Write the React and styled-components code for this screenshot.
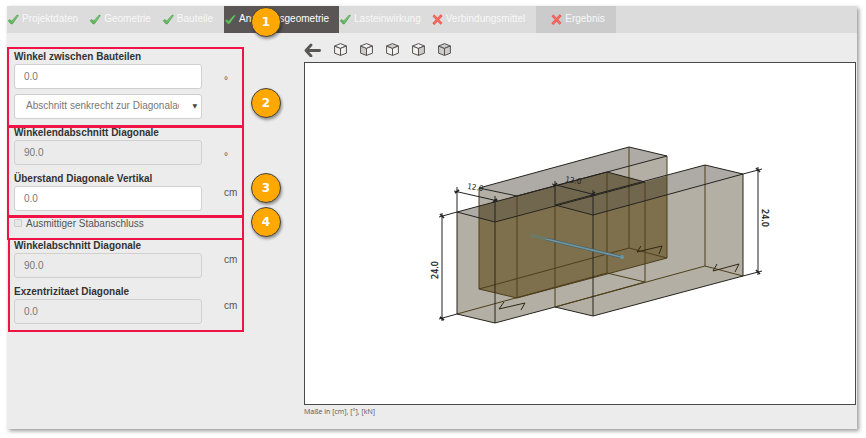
import React, { useState } from "react";
import styled, { createGlobalStyle } from "styled-components";

const colors = {
  panel: "#ececec",
  nav: "#dcdcdc",
  dark: "#5a5655",
  result: "#cbcbcb",
  mark: "#ee1446",
  badge: "#ffa800",
  text: "#555555",
  label: "#333333",
};

const GlobalStyle = createGlobalStyle`
  * {
    box-sizing: border-box;
  }
  body {
    margin: 0;
    background-color: #ffffff;
    color: ${colors.text};
    font-family: "Liberation Sans", Arial, sans-serif;
    font-size: 10px;
    line-height: 14px;
  }
`;

const Page = styled.div`
  padding: 6px 9px 9px 7px;
`;

const Panel = styled.main`
  background-color: ${colors.panel};
  box-shadow: 2px 2px 4px rgba(0, 0, 0, 0.4);
`;

const Nav = styled.nav`
  display: flex;
  height: 27px;
  background-color: ${colors.nav};
`;

const Tab = styled.a`
  position: relative;
  display: flex;
  align-items: center;
  gap: 3px;
  padding: 0 ${(p) => (p.$active ? "10px" : "11px")} 2px
    ${(p) => (p.$result ? "15px" : "0")};
  color: ${(p) => (p.$active ? "#ffffff" : "#f8f8f8")};
  background-color: ${(p) =>
    p.$active ? colors.dark : p.$result ? colors.result : "transparent"};
  text-decoration: none;
  white-space: nowrap;
`;

const Badge = styled.span`
  position: absolute;
  top: ${(p) => p.$top}px;
  left: ${(p) => p.$left}px;
  z-index: 2;
  display: flex;
  align-items: center;
  justify-content: center;
  width: 30px;
  height: 30px;
  border: 1px solid #444444;
  border-radius: 50%;
  background-color: ${colors.badge};
  box-shadow: 1px 2px 3px rgba(0, 0, 0, 0.4);
  color: #ffffff;
  font-family: "DejaVu Sans", Verdana, sans-serif;
  font-size: 12px;
  font-weight: bold;
`;

const Content = styled.div`
  display: grid;
  grid-template-columns: 297px 1fr;
`;

const Form = styled.form`
  display: flex;
  flex-direction: column;
  padding: 14px 60px 0 0;
`;

const Group = styled.section`
  position: relative;
  display: flex;
  flex-direction: column;
  gap: ${(p) => p.$gap || 7}px;
  margin-top: ${(p) => p.$overlap || 0}px;
  margin-left: ${(p) => p.$inset || 0}px;
  padding: ${(p) => p.$pad};
  box-shadow: inset 0 0 0 2px ${colors.mark};
`;

const FieldDiv = styled.div`
  display: grid;
  grid-template-columns: 188px 1fr;
  column-gap: 22px;
`;

const Label = styled.label`
  grid-column: 1 / -1;
  color: ${colors.label};
  font-weight: bold;
`;

const Input = styled.input`
  width: 100%;
  height: 25px;
  padding: 0 9px 1px;
  border: 1px solid #d0d0d0;
  border-radius: 3px;
  background-color: #ffffff;
  color: #777777;
  font: inherit;

  &:disabled {
    background-color: #ebebeb;
  }
`;

const SelectDiv = styled.div`
  position: relative;

  &::after {
    content: "▼";
    position: absolute;
    top: 6px;
    right: 5px;
    color: #444444;
    font-family: "DejaVu Sans", sans-serif;
    font-size: 6px;
    line-height: 12px;
    pointer-events: none;
  }
`;

const Select = styled.select`
  display: block;
  width: 100%;
  height: 25px;
  padding: 0 22px 1px 11px;
  border: 1px solid #d0d0d0;
  border-radius: 3px;
  appearance: none;
  background-color: #ffffff;
  color: #777777;
  font: inherit;
  text-overflow: clip;
`;

const Unit = styled.span`
  padding-top: ${(p) => (p.$low ? "10px" : "0")};
`;

const CheckLabel = styled.label`
  display: flex;
  align-items: center;
  gap: 4px;
  height: 16px;
`;

const Checkbox = styled.input`
  width: 8px;
  height: 8px;
  margin: 0 0 2px;
  border: 1px solid #cccccc;
  border-radius: 1px;
  appearance: none;
  background-color: #e6e6e6;

  &:checked {
    background-color: ${colors.dark};
  }
`;

const Viewer = styled.section`
  min-width: 0;
  padding: 0 1px 10px 0;
`;

const Toolbar = styled.div`
  display: flex;
  align-items: center;
  gap: 13px;
  height: 29px;
  padding-top: 3px;
`;

const ToolButton = styled.button`
  display: flex;
  padding: 0;
  border: none;
  background: none;
  cursor: pointer;
`;

const Drawing = styled.svg`
  display: block;
  width: 100%;
  height: auto;
  border: 1px solid #4a4a4a;
  background-color: #ffffff;
  font-family: "DejaVu Sans", Verdana, sans-serif;
`;

const Caption = styled.p`
  margin: 0;
  font-family: "Open Sans", sans-serif;
  font-size: 7px;
  line-height: 14px;
`;

const CheckIcon = () => (
  <svg width="12" height="12" viewBox="0 0 12 12" aria-hidden="true">
    <path
      d="M1.2 7.8 L2.6 6.6 L4.8 8 L10.2 2 L11.4 2.6 L5.4 10.9 L4 10.9 Z"
      fill="#62b65f"
      stroke="#4c9c4c"
      strokeWidth="0.6"
      strokeLinejoin="round"
    />
    <path d="M4.9 9.2 L10.4 2.9" stroke="#86cc82" strokeWidth="0.7" />
  </svg>
);

const CrossIcon = () => (
  <svg width="11" height="12" viewBox="0 0 11 12" aria-hidden="true">
    <path
      d="M2.4 3.4 L8.6 9.8 M8.8 3 L2.2 10.2"
      stroke="#e8524c"
      strokeWidth="2.6"
      strokeLinecap="square"
    />
    <path
      d="M2.4 3.4 L8.6 9.8 M8.8 3 L2.2 10.2"
      stroke="#f96a63"
      strokeWidth="1.6"
      strokeLinecap="square"
    />
  </svg>
);

const ArrowIcon = () => (
  <svg width="17" height="15" viewBox="0 0 17 15" aria-hidden="true">
    <path
      d="M7 3 L2 8.5 L7 14 M2.4 8.5 H15.6"
      fill="none"
      stroke={colors.dark}
      strokeWidth="2.8"
      strokeLinecap="round"
      strokeLinejoin="round"
    />
  </svg>
);

const faces = {
  left: "M0.6 3 L6.5 5.4 V12.4 L0.6 10.2 Z",
  top: "M6.5 0.6 L12.4 3 L6.5 5.4 L0.6 3 Z",
  right: "M12.4 3 L6.5 5.4 V12.4 L12.4 10.2 Z",
};

const CubeIcon = ({ shaded }) => (
  <svg width="13" height="13" viewBox="0 0 13 13" aria-hidden="true">
    {Object.keys(faces).map((face) => (
      <path
        key={face}
        d={faces[face]}
        fill={shaded.includes(face) ? "#cccccc" : "#f1f1f1"}
        stroke="#55524f"
        strokeWidth="1"
        strokeLinejoin="round"
      />
    ))}
  </svg>
);

const tabs = [
  { name: "Projektdaten", done: true },
  { name: "Geometrie", done: true },
  { name: "Bauteile", done: true },
  { name: "Anschlussgeometrie", done: true, active: true },
  { name: "Lasteinwirkung", done: true },
  { name: "Verbindungsmittel", done: false },
  { name: "Ergebnis", done: false, result: true },
];

const views = [
  { name: "Drahtmodell", shaded: [] },
  { name: "Ansicht links", shaded: ["left"] },
  { name: "Ansicht oben", shaded: ["top"] },
  { name: "Ansicht rechts", shaded: ["right"] },
  { name: "Isometrie", shaded: ["left", "top", "right"] },
];

const Field = ({ id, label, unit, initial, disabled }) => {
  const [value, setValue] = useState(initial);
  return (
    <FieldDiv>
      <Label htmlFor={id}>{label}</Label>
      <Input
        id={id}
        value={value}
        disabled={disabled}
        onChange={(e) => setValue(e.target.value)}
      />
      <Unit $low={unit === "°"}>{unit}</Unit>
    </FieldDiv>
  );
};

const Model = () => (
  <Drawing viewBox="305 63 550 341" role="img" aria-label="Anschluss">
    {/* light side faces */}
    <g fill="#b3afa5">
      <path d="M479 188 L517 196 L667 156 V258 L517 298 L479 289 Z" />
      <path d="M457 212 L607 172 L645 182 L705 165 L743 174 V276 L593 316 L555 307 L495 323 L457 314 Z" />
    </g>
    {/* light top faces */}
    <g fill="#aeaba7">
      <path d="M479 188 L629 147 L667 156 L517 196 Z" />
      <path d="M457 212 L607 172 L645 182 L495 222 Z" />
      <path d="M555 205 L705 165 L743 174 L593 215 Z" />
    </g>
    {/* overlap of the beams */}
    <path
      d="M479 206 L607 172 L645 182 L667 176 V258 L517 298 L479 289 Z"
      fill="#7f704d"
    />
    <path
      d="M479 206 L607 172 L645 182 L667 176 V195 L593 215 L555 205 L495 222 L479 218 Z"
      fill="#71674f"
    />
    {/* hidden edges */}
    <g fill="none" stroke="#4c3f1a" strokeWidth="1">
      <path d="M479 188 V289 L517 298 V196" />
      <path d="M479 289 L629 248 L667 258 L517 298" />
      <path d="M629 147 V248 M667 156 V258" />
      <path d="M457 314 L607 273 L645 282 L555 307" />
      <path d="M607 172 V273 M645 182 V282" />
      <path d="M555 307 L705 266 L743 276" />
      <path d="M555 205 V307 M705 165 V266" />
    </g>
    {/* visible edges */}
    <g fill="none" stroke="#26241f" strokeWidth="1">
      <path d="M479 188 L629 147 L667 156 L517 196 Z" />
      <path d="M457 212 L607 172 L645 182 L495 222 Z" />
      <path d="M555 205 L705 165 L743 174 L593 215 Z" />
      <path d="M457 212 V314 L495 323 V222" />
      <path d="M495 323 L555 307 L593 316 V215" />
      <path d="M593 316 L743 276 V174" />
    </g>
    {/* grain direction marks */}
    <g fill="none" stroke="#2f2810" strokeWidth="1">
      <path d="M504 302 L499 309 L525 303 L521 310" />
      <path d="M641 246 L637 252 L662 246 L659 254" />
      <path d="M717 264 L713 271 L739 264 L735 272" />
    </g>
    {/* screw */}
    <path d="M530 235 L546 239" stroke="#6b7a66" strokeWidth="3" />
    <path d="M546 239 L621 257" stroke="#49666d" strokeWidth="3" />
    <path d="M546 239 L621 257" stroke="#7395a0" strokeWidth="1.6" />
    <circle cx="622" cy="257" r="2" fill="#6296a8" />
    {/* dimension lines */}
    <g fill="none" stroke="#222222" strokeWidth="1">
      <path d="M457 187 V212 M495 196 V222 M454 191 L498 201" />
      <path d="M555 181 V205 M593 190 V215 M552 184 L596 195" />
      <path d="M442 213 V321 M439 217 L457 212 M439 319 L457 314" />
      <path d="M758 167 V275 M743 174 L762 169 M743 276 L762 271" />
    </g>
    <g fill="none" stroke="#222222" strokeWidth="1.6">
      <path d="M455 193 L459 190 M493 202 L497 199" />
      <path d="M553 187 L557 183 M591 196 L595 192" />
      <path d="M440 214 L444 218 M440 317 L444 320" />
      <path d="M756 168 L760 172 M756 270 L760 274" />
    </g>
    <g fill="#222222" fontSize="8" textAnchor="middle">
      <g fontFamily="DejaVu Sans Condensed, sans-serif">
        <text x="475" y="190" transform="rotate(8 475 190)">
          12.0
        </text>
        <text x="573" y="183" transform="rotate(8 573 183)">
          12.0
        </text>
      </g>
      <text
        x="438"
        y="270"
        stroke="#222222"
        strokeWidth="0.3"
        transform="rotate(-90 438 270)"
      >
        24.0
      </text>
      <text
        x="762"
        y="218"
        stroke="#222222"
        strokeWidth="0.3"
        transform="rotate(90 762 218)"
      >
        24.0
      </text>
    </g>
  </Drawing>
);

export default function App() {
  const [eccentric, setEccentric] = useState(false);

  return (
    <Page>
      <GlobalStyle />
      <Panel>
        <Nav>
          {tabs.map((tab) => (
            <Tab
              key={tab.name}
              href={`#${tab.name}`}
              $active={tab.active}
              $result={tab.result}
            >
              {tab.done ? <CheckIcon /> : <CrossIcon />}
              {tab.name}
              {tab.active && (
                <Badge $top={1} $left={27}>
                  1
                </Badge>
              )}
            </Tab>
          ))}
        </Nav>
        <Content>
          <Form>
            <Group $gap={5} $pad="3px 5px 8px 7px">
              <Field
                id="angle"
                label="Winkel zwischen Bauteilen"
                unit="°"
                initial="0.0"
              />
              <FieldDiv>
                <SelectDiv>
                  <Select aria-label="Abschnitt" defaultValue="diagonal">
                    <option value="diagonal">
                      Abschnitt senkrecht zur Diagonalachse
                    </option>
                    <option value="vertical">Abschnitt vertikal</option>
                  </Select>
                </SelectDiv>
              </FieldDiv>
              <Badge $top={41} $left={244}>
                2
              </Badge>
            </Group>
            <Group $overlap={-1} $pad="0 5px 6px 7px">
              <Field
                id="end-angle"
                label="Winkelendabschnitt Diagonale"
                unit="°"
                initial="90.0"
                disabled
              />
              <Field
                id="overhang"
                label="Überstand Diagonale Vertikal"
                unit="cm"
                initial="0.0"
              />
              <Badge $top={47} $left={244}>
                3
              </Badge>
            </Group>
            <Group $overlap={-1} $pad="0 5px 8px 7px">
              <CheckLabel>
                <Checkbox
                  type="checkbox"
                  checked={eccentric}
                  onChange={(e) => setEccentric(e.target.checked)}
                />
                Ausmittiger Stabanschluss
              </CheckLabel>
              <Badge $top={-9} $left={244}>
                4
              </Badge>
            </Group>
            <Group $overlap={-2} $inset={1} $pad="1px 5px 8px 6px">
              <Field
                id="section-angle"
                label="Winkelabschnitt Diagonale"
                unit="cm"
                initial="90.0"
                disabled
              />
              <Field
                id="eccentricity"
                label="Exzentrizitaet Diagonale"
                unit="cm"
                initial="0.0"
                disabled
              />
            </Group>
          </Form>
          <Viewer>
            <Toolbar>
              <ToolButton type="button" aria-label="Zurück">
                <ArrowIcon />
              </ToolButton>
              {views.map((view) => (
                <ToolButton key={view.name} type="button" aria-label={view.name}>
                  <CubeIcon shaded={view.shaded} />
                </ToolButton>
              ))}
            </Toolbar>
            <Model />
            <Caption>Maße in [cm], [°], [kN]</Caption>
          </Viewer>
        </Content>
      </Panel>
    </Page>
  );
}
